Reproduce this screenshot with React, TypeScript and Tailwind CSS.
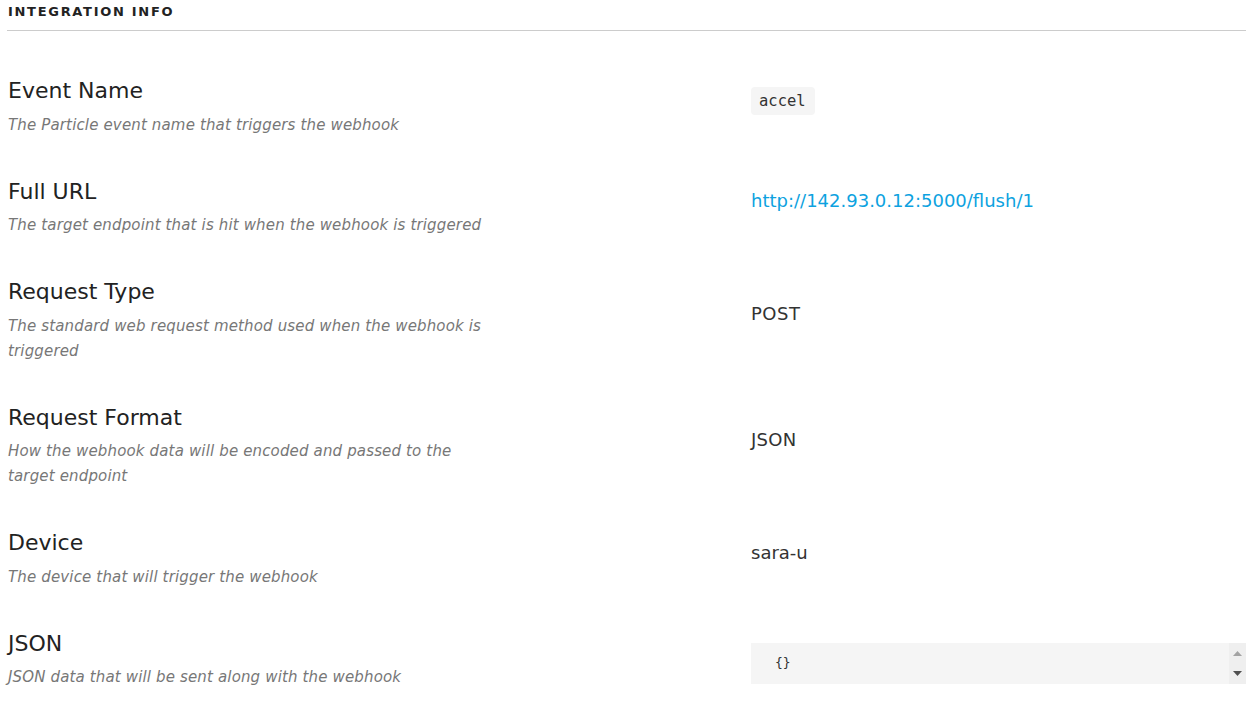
const rows = [
  {
    title: "Event Name",
    desc: "The Particle event name that triggers the webhook",
    value: (
      <code className="inline-block rounded-[4px] bg-[#f5f5f5] pl-[8px] pr-[9px] py-[4px] font-['DejaVu_Sans_Mono',monospace] text-[15.5px] leading-[20px] text-[#333]">
        accel
      </code>
    ),
  },
  {
    title: "Full URL",
    desc: "The target endpoint that is hit when the webhook is triggered",
    value: <a className="text-[#0da2e0]">http://142.93.0.12:5000/flush/1</a>,
  },
  {
    title: "Request Type",
    desc: "The standard web request method used when the webhook is triggered",
    value: <span className="tracking-[0.5px]">POST</span>,
  },
  {
    title: "Request Format",
    desc: "How the webhook data will be encoded and passed to the target endpoint",
    value: <span className="tracking-[0.3px]">JSON</span>,
  },
  {
    title: "Device",
    desc: "The device that will trigger the webhook",
    value: <span>sara-u</span>,
  },
];

export default function App() {
  return (
    <div className="min-h-[702px] bg-white font-['DejaVu_Sans',sans-serif] text-[#333]">
      <div className="pl-[7px] pr-[12px]">
        <h3 className="border-b border-[#cccccc] pl-[1px] pt-[4px] pb-[10px] text-[13px] font-bold leading-[16px] tracking-[1.7px] text-[#222]">
          INTEGRATION INFO
        </h3>

        <div className="pt-[45px]">
          {rows.map((row) => (
            <div key={row.title} className="flex items-center pb-[39px]">
              <div className="w-[744px] shrink-0 pl-[1px]">
                <h4 className="text-[22px] leading-[30px] text-[#222]">{row.title}</h4>
                <p className="mt-[6.5px] max-w-[495px] text-[15px] italic leading-[25px] tracking-[0.15px] text-[#777]">
                  {row.desc}
                </p>
              </div>
              <div className="flex-1 pb-[12px] text-[18px] leading-[24px]">{row.value}</div>
            </div>
          ))}

          {/* JSON row */}
          <div className="flex items-start">
            <div className="w-[744px] shrink-0 pl-[1px]">
              <h4 className="text-[22px] leading-[30px] text-[#222]">JSON</h4>
              <p className="mt-[6.5px] max-w-[495px] text-[15px] italic leading-[25px] tracking-[0.15px] text-[#777]">
                JSON data that will be sent along with the webhook
              </p>
            </div>
            <div className="mt-[14px] flex h-[41px] flex-1 bg-[#f5f5f5]">
              <div className="flex-1 pl-[24px] pt-[11px] font-['DejaVu_Sans_Mono',monospace] text-[13px] leading-[18px] text-[#333]">
                {"{}"}
              </div>
              <div className="flex w-[17px] flex-col items-center justify-between bg-[#efefef] py-[8px]">
                <svg width="9" height="5" viewBox="0 0 9 5">
                  <path d="M4.5 0 L9 5 L0 5 Z" fill="#a3a3a3" />
                </svg>
                <svg width="9" height="5" viewBox="0 0 9 5">
                  <path d="M0 0 L9 0 L4.5 5 Z" fill="#505050" />
                </svg>
              </div>
            </div>
          </div>
        </div>
      </div>
    </div>
  );
}
